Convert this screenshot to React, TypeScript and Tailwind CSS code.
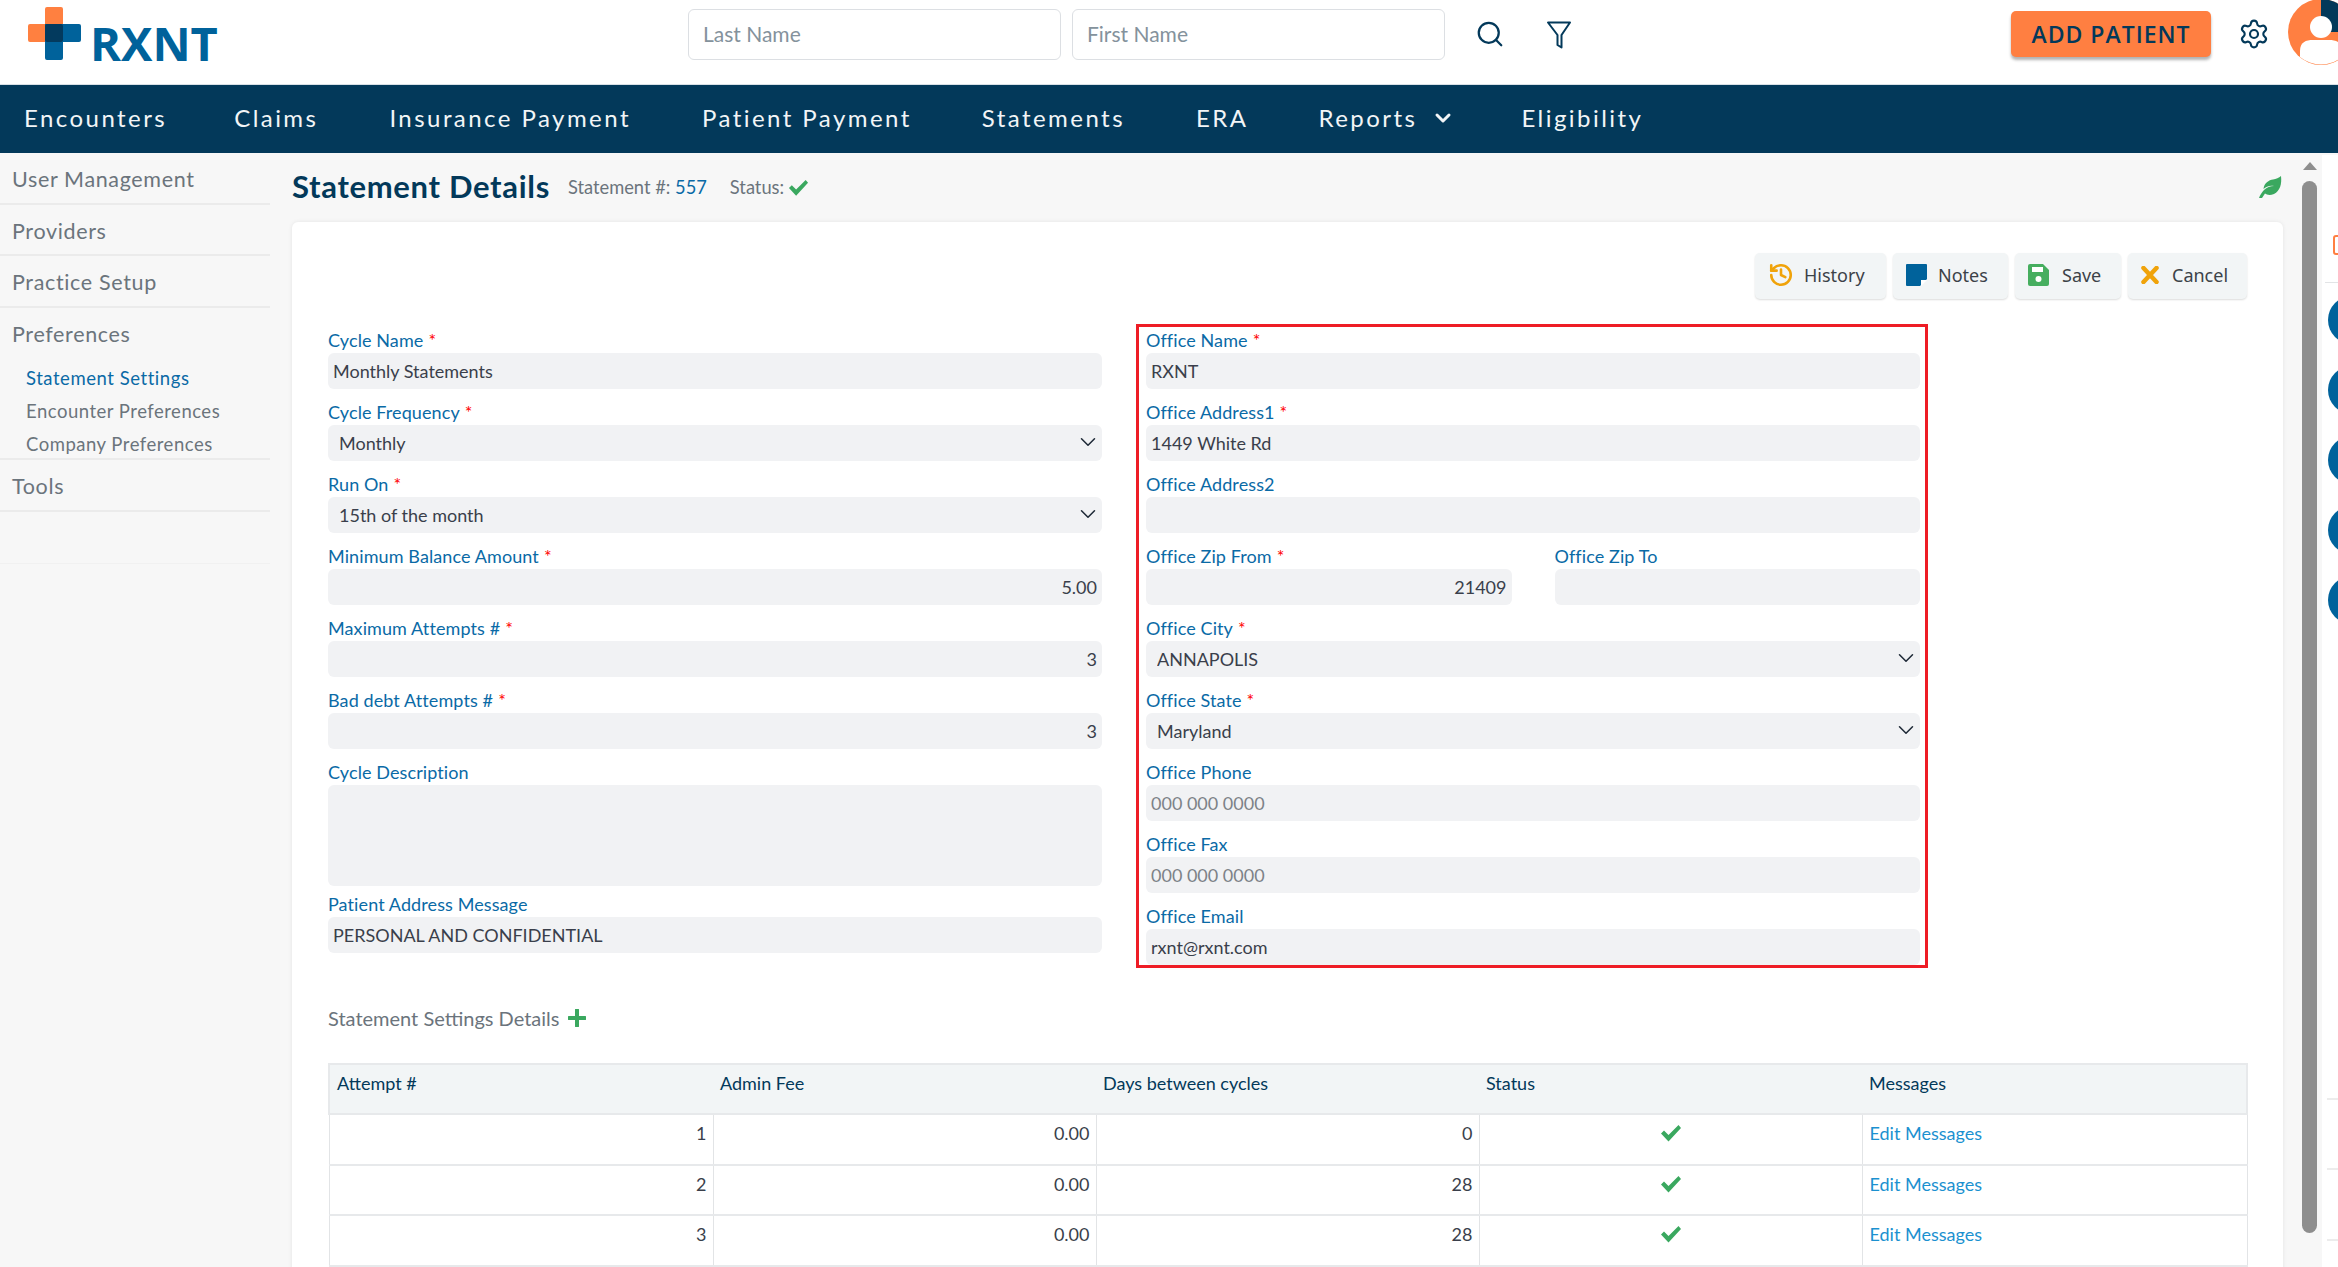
import React from "react";
import { ChevronDown, Search, Settings, History } from "lucide-react";

const FONT = "font-['Lato','Noto_Sans',sans-serif]";

function Logo() {
  return (
    <div className="flex items-center ml-[28px] w-[200px] -mt-[16px]">
      <svg width="54" height="54" viewBox="0 0 54 54" className="shrink-0">
        <path d="M17 2a2 2 0 0 1 2-2h14a2 2 0 0 1 2 2v33H2a2 2 0 0 1-2-2V19a2 2 0 0 1 2-2h15z" fill="#ff8040" />
        <path d="M17 17h34a2 2 0 0 1 2 2v14a2 2 0 0 1-2 2H35v16a2 2 0 0 1-2 2H19a2 2 0 0 1-2-2z" fill="#00629b" />
        <rect x="17" y="17" width="18" height="18" rx="2" fill="#033a5e" />
      </svg>
      <span className="ml-[8px] mt-[18px] text-[47px] leading-none font-bold text-[#00629b] font-['Open_Sans',sans-serif]">RXNT</span>
    </div>
  );
}

function Field({ label, req, value, right, placeholder, className = "" }: { label: string; req?: boolean; value?: string; right?: boolean; placeholder?: string; className?: string }) {
  return (
    <div className={`mb-[12px] ${className}`}>
      <Label label={label} req={req} />
      <input
        readOnly
        value={value ?? ""}
        placeholder={placeholder}
        className={`block w-full h-[36px] rounded-[6px] bg-[#f1f2f4] px-[5px] text-[18px] text-[#3a3f4b] outline-none placeholder:text-[#7d8288] ${right ? "text-right" : ""}`}
      />
    </div>
  );
}

function Label({ label, req }: { label: string; req?: boolean }) {
  return (
    <div className="h-[24px] text-[18px] tracking-[0.1px] leading-[22px] text-[#0a6aa6]">
      {label}
      {req && <span className="text-[#f00] ml-[5px]">*</span>}
    </div>
  );
}

function SelectField({ label, value }: { label: string; value: string }) {
  return (
    <div className="mb-[12px]">
      <Label label={label} req />
      <div className="relative">
        <select
          defaultValue={value}
          className="block w-full h-[36px] appearance-none rounded-[6px] bg-[#f1f2f4] pl-[11px] text-[18px] text-[#3a3f4b] outline-none"
        >
          <option>{value}</option>
        </select>
        <ChevronDown size={26} strokeWidth={1.4} className="absolute right-[1px] top-[4px] text-[#1f2a37]" />
      </div>
    </div>
  );
}

function ActionButton({ icon, text, width }: { icon: React.ReactNode; text: string; width: string }) {
  return (
    <button className={`${width} h-[46px] flex items-center pl-[13px] pb-[2px] rounded-[5px] bg-[#f2f5f6] shadow-[0_1px_2px_rgba(0,0,0,0.14)] text-[18px] text-[#3c4248] font-['Noto_Sans',sans-serif]`}>
      {icon}
      {text}
    </button>
  );
}

function Check({ size = 22 }: { size?: number }) {
  return (
    <svg width={size} height={size * 0.82} viewBox="0 0 22 18" className="inline-block">
      <path d="M1 9.5 4 6.5 8.5 11 18.5 1 21 4 8.5 17.5z" fill="#3aa85f" />
    </svg>
  );
}

const navItems = [
  { name: "Encounters", cls: "mr-[67px]" },
  { name: "Claims", cls: "mr-[71px]" },
  { name: "Insurance Payment", cls: "mr-[71px]" },
  { name: "Patient Payment", cls: "mr-[70px]" },
  { name: "Statements", cls: "mr-[71px]" },
  { name: "ERA", cls: "mr-[70px]" },
];

export default function App() {
  return (
    <div className={`w-[2338px] h-[1267px] overflow-hidden flex flex-col bg-white ${FONT}`}>
      {/* Header */}
      <header className="h-[84px] shrink-0 flex items-center relative bg-white">
        <Logo />
        <div className="ml-[460px] flex gap-[11px] -mt-[16px]">
          <input placeholder="Last Name" className="w-[373px] h-[51px] rounded-[6px] border border-[#dcdfe3] px-[14px] pb-[2px] text-[21px] outline-none placeholder:text-[#84929c]" />
          <input placeholder="First Name" className="w-[373px] h-[51px] rounded-[6px] border border-[#dcdfe3] px-[14px] pb-[2px] text-[21px] outline-none placeholder:text-[#84929c]" />
        </div>
        <Search size={30} strokeWidth={1.8} className="ml-[30px] -mt-[16px] text-[#03395a]" />
        <svg width="26" height="28" viewBox="0 0 26 28" className="ml-[41px] -mt-[14px]" fill="none" stroke="#03395a" strokeWidth="2" strokeLinejoin="round">
          <path d="M2 1.5h22L15.5 14v12.5l-4-2.500V14z" />
        </svg>
        <button className="ml-[439px] -mt-[16px] w-[200px] h-[46px] rounded-[5px] bg-[#ff7f41] text-[#03395a] text-[23px] font-semibold tracking-[1px] shadow-[0_3px_3px_rgba(0,0,0,0.3)] font-['Open_Sans',sans-serif]">ADD PATIENT</button>
        <Settings size={32} strokeWidth={1.6} className="ml-[27px] -mt-[16px] text-[#03395a]" />
        <svg width="66" height="66" viewBox="0 0 66 66" className="absolute left-[2288px] top-[-1px]">
          <circle cx="33" cy="33" r="33" fill="#ff7f41" />
          <path d="M33 0a33 33 0 0 1 33 33H33z" fill="#03395a" />
          <circle cx="33" cy="28" r="11" fill="#fff" />
          <path d="M12 52c0-9 6-11 13-11h16c7 0 13 2 13 11v6a33 33 0 0 1-42 0z" fill="#fff" />
        </svg>
      </header>

      {/* Nav */}
      <nav className="h-[69px] shrink-0 flex items-center bg-[#03395a] border-t border-[#d8e0e6] text-[24px] tracking-[2.45px] text-[#f2f5f7] pl-[24px] pb-[2px]">
        {navItems.map((n) => (
          <span key={n.name} className={n.cls}>{n.name}</span>
        ))}
        <span>Reports</span>
        <ChevronDown size={24} strokeWidth={3} className="ml-[14px] mr-[66px]" />
        <span>Eligibility</span>
      </nav>

      {/* Body */}
      <div className="flex-1 min-h-0 flex bg-[#f7f7f7]">
        {/* Sidebar */}
        <aside className="w-[292px] shrink-0 text-[#6b747c]">
          <div className="w-[270px]">
            <div className="h-[52px] pl-[12px] pt-[10px] text-[21.5px] tracking-[0.65px] border-b-2 border-[#ebebeb]">User Management</div>
            <div className="h-[51px] pl-[12px] pt-[10px] text-[21.5px] tracking-[0.65px] border-b-2 border-[#ebebeb]">Providers</div>
            <div className="h-[52px] pl-[12px] pt-[10px] text-[21.5px] tracking-[0.65px] border-b-2 border-[#ebebeb]">Practice Setup</div>
            <div className="h-[152px] pl-[12px] pt-[10px] border-b-2 border-[#ebebeb]">
              <div className="text-[21.5px] tracking-[0.65px]">Preferences</div>
              <div className="pl-[14px] mt-[15px] text-[18.500px] tracking-[0.55px] text-[#0a6aa6]">Statement Settings</div>
              <div className="pl-[14px] mt-[5px] text-[18.500px] tracking-[0.5px]">Encounter Preferences</div>
              <div className="pl-[14px] mt-[5px] text-[18.500px] tracking-[0.5px]">Company Preferences</div>
            </div>
            <div className="h-[52px] pl-[12px] pt-[10px] text-[21.5px] tracking-[0.65px] border-b-2 border-[#ebebeb]">Tools</div>
            <div className="h-[52px] border-b border-[#f1f1f1]" />
          </div>
        </aside>

        {/* Content */}
        <main className="w-[2010px] shrink-0 pr-[19px]">
          <div className="h-[69px] flex items-center pb-[2px]">
            <h1 className="text-[31px] font-bold tracking-[0.68px] text-[#03395a]">Statement Details</h1>
            <span className="ml-[18px] mt-[3px] text-[18.300px] text-[#6b747c]">Statement #: <span className="text-[#0a6aa6]">557</span></span>
            <span className="ml-[23px] mt-[3px] text-[18.300px] text-[#6b747c] flex items-center gap-[4px]">Status: <Check size={21} /></span>
            <svg width="24" height="22" viewBox="0 0 24 22" className="ml-auto mr-[1px]">
              <path d="M23 0c1 8-1 15-7 18-4 1.500-7 1-9-.5L4 22H1c1-3 3-6 5-8 3-2.500 6-4 10-4-4-1-8 .5-10.500 3C6 7 11 4 15 3.500 18 3 21 2 23 0z" fill="#3aa85f" />
            </svg>
          </div>

          <section className="h-[1100px] rounded-t-[6px] bg-white shadow-[0_0_4px_rgba(0,0,0,0.08)] pt-[31px] px-[36px]">
            <div className="flex justify-end gap-[7px]">
              <ActionButton
                width="w-[131px]"
                text="History"
                icon={<History size={26} strokeWidth={2.4} className="text-[#f0a30a] mr-[10px]" />}
              />
              <ActionButton
                width="w-[115px]"
                text="Notes"
                icon={
                  <svg width="21" height="22" viewBox="0 0 21 22" className="mr-[11px]">
                    <path d="M1 0h19a1 1 0 0 1 1 1v14l-7 7H1a1 1 0 0 1-1-1V1a1 1 0 0 1 1-1z" fill="#00629b" />
                    <path d="M15 16h6l-6 6z" fill="#fff" />
                  </svg>
                }
              />
              <ActionButton
                width="w-[106px]"
                text="Save"
                icon={
                  <svg width="21" height="22" viewBox="0 0 21 22" className="mr-[13px]">
                    <path d="M2 0h13l6 6v14a2 2 0 0 1-2 2H2a2 2 0 0 1-2-2V2a2 2 0 0 1 2-2z" fill="#46ae5f" />
                    <rect x="4" y="3" width="11" height="5" fill="#fff" />
                    <circle cx="10.500" cy="15" r="3" fill="#fff" />
                  </svg>
                }
              />
              <ActionButton
                width="w-[119px] pl-[12px]"
                text="Cancel"
                icon={
                  <svg width="18" height="18" viewBox="0 0 18 18" className="mr-[13px]">
                    <path d="M2.500 2 15.500 16M15.500 2 2.500 16" stroke="#f0a30a" strokeWidth="4.500" strokeLinecap="round" />
                  </svg>
                }
              />
            </div>

            <div className="grid grid-cols-[774px_774px] gap-x-[43px] items-start mt-[30px]">
              {/* Left column */}
              <div>
                <Field label="Cycle Name" req value="Monthly Statements" />
                <SelectField label="Cycle Frequency" value="Monthly" />
                <SelectField label="Run On" value="15th of the month" />
                <Field label="Minimum Balance Amount" req value="5.00" right />
                <Field label="Maximum Attempts #" req value="3" right />
                <Field label="Bad debt Attempts #" req value="3" right />
                <Label label="Cycle Description" />
                <textarea readOnly className="block w-full h-[101px] rounded-[6px] bg-[#f1f2f4] mb-[7px] outline-none resize-none" />
                <Field label="Patient Address Message" value="PERSONAL AND CONFIDENTIAL" className="!mb-0" />
              </div>

              {/* Right column */}
              <div className="-mx-[9px] -mt-[5px] border-[3px] border-[#ee1c25] pt-[2px] pl-[7px] pr-[5px]">
                <Field label="Office Name" req value="RXNT" />
                <Field label="Office Address1" req value="1449 White Rd" />
                <Field label="Office Address2" />
                <div className="grid grid-cols-2 gap-x-[43px]">
                  <Field label="Office Zip From" req value="21409" right />
                  <Field label="Office Zip To" />
                </div>
                <SelectField label="Office City" value="ANNAPOLIS" />
                <SelectField label="Office State" value="Maryland" />
                <Field label="Office Phone" placeholder="000 000 0000" />
                <Field label="Office Fax" placeholder="000 000 0000" />
                <Field label="Office Email" value="rxnt@rxnt.com" className="!mb-0" />
              </div>
            </div>

            <div className="mt-[36px] h-[28px] flex items-center text-[20px] text-[#6b747c]">
              Statement Settings Details
              <svg width="18" height="18" viewBox="0 0 18 18" className="ml-[9px]">
                <path d="M9 1v16M1 9h16" stroke="#3aa85f" strokeWidth="4" strokeLinecap="round" />
              </svg>
            </div>

            <table className="mt-[31px] w-[1918px] table-fixed border-collapse text-[18px]">
              <colgroup>
                <col className="w-[384px]" />
                <col className="w-[383px]" />
                <col className="w-[383px]" />
                <col className="w-[383px]" />
                <col className="w-[385px]" />
              </colgroup>
              <thead>
                <tr className="h-[50px] bg-[#f2f5f6] border-2 border-[#e7e9eb] text-[#03395a]">
                  {["Attempt #", "Admin Fee", "Days between cycles", "Status", "Messages"].map((h) => (
                    <th key={h} className="font-normal text-left align-top pt-[6px] pl-[7px]">
                      <span className="block h-[24px] leading-[24px]">{h}</span>
                    </th>
                  ))}
                </tr>
              </thead>
              <tbody>
                {[
                  ["1", "0.00", "0"],
                  ["2", "0.00", "28"],
                  ["3", "0.00", "28"],
                ].map((r) => (
                  <tr key={r[0]} className="h-[50.500px] border-b-2 border-[#e7e9eb] text-[#3a3f4b]">
                    {r.map((c, i) => (
                      <td key={i} className="border-x border-[#e2e4e6] text-right align-top pt-[5px] pr-[6px]">{c}</td>
                    ))}
                    <td className="border-x border-[#e2e4e6] text-center align-top pt-[3px]"><Check /></td>
                    <td className="border-x border-[#e2e4e6] align-top pt-[5px] pl-[7px] text-[#1b91d0]">Edit Messages</td>
                  </tr>
                ))}
              </tbody>
            </table>
          </section>
        </main>

        {/* Scrollbar */}
        <div className="w-[15px] shrink-0 flex flex-col items-center pt-[9px]">
          <div className="w-0 h-0 border-x-[7px] border-x-transparent border-b-[8px] border-b-[#8e8e8e]" />
          <div className="w-[15px] h-[1052px] mt-[11px] rounded-full bg-[#8e8e8e]" />
        </div>

        {/* Right rail */}
        <div className="ml-[5px] w-[16px] shrink-0 mt-[2px] bg-white overflow-hidden">
          <div className="ml-[11px] mt-[80px] w-[20px] h-[20px] rounded-[3px] border-2 border-[#ff7f41]" />
          <div className="ml-[3px] mt-[27px] w-[20px] border-t border-[#e2e4e6]" />
          <div className="ml-[6px] mt-[13px] flex flex-col gap-[22px]">
            {[0, 1, 2, 3, 4].map((i) => (
              <div key={i} className="w-[48px] h-[48px] rounded-full bg-[#00629b]" />
            ))}
          </div>
          <div className="ml-[5px] mt-[474px] w-[20px] border-t-2 border-[#ececec]" />
          <div className="ml-[5px] mt-[68px] w-[20px] border-t-2 border-[#ececec]" />
          <div className="ml-[5px] mt-[69px] w-[20px] border-t-2 border-[#ececec]" />
        </div>
      </div>
    </div>
  );
}
